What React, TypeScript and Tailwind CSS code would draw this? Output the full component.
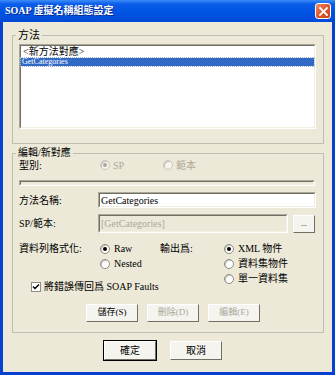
import React from 'react'

const Radio = ({ checked, disabled }: { checked?: boolean; disabled?: boolean }) => (
  <span
    className={`inline-flex h-[10px] w-[10px] shrink-0 items-center justify-center rounded-full border ${
      disabled ? 'border-[#CAC8BB] bg-[#F4F3EE]' : 'border-[#8E8C80] bg-white'
    } shadow-[inset_1px_1px_0_#C7C5B8]`}
  >
    {checked && (
      <span className={`h-[4px] w-[4px] rounded-full ${disabled ? 'bg-[#ACA899]' : 'bg-black'}`} />
    )}
  </span>
)

const Sunken = ({ className, children }: { className?: string; children?: React.ReactNode }) => (
  <div className={`border border-[#ACA899] border-b-white border-r-white ${className ?? ''}`}>
    <div className="h-full w-full border border-[#716F64] border-b-[#F1EFE2] border-r-[#F1EFE2]">
      {children}
    </div>
  </div>
)

const Button = ({
  label,
  disabled,
  isDefault,
  className,
}: {
  label: React.ReactNode
  disabled?: boolean
  isDefault?: boolean
  className?: string
}) => (
  <div
    className={`flex items-center justify-center ${
      isDefault ? 'border border-black' : 'border border-[#ECE9D8]'
    } ${className ?? ''}`}
  >
    <div className="flex h-full w-full items-center justify-center border border-white border-b-[#716F64] border-r-[#716F64] bg-[#F5F4EF]">
      <span className={disabled ? 'text-[#ACA899]' : 'text-black'}>{label}</span>
    </div>
  </div>
)

export default function App() {
  return (
    <div className="flex h-[375px] w-[335px] flex-col bg-[#0841D0] font-['Liberation_Serif','Noto_Sans_CJK_TC',serif] text-[10px] text-black">
      {/* title bar */}
      <div className="flex h-[22px] items-center bg-[linear-gradient(180deg,#3D8EF9_0%,#0B5DE9_18%,#0054E3_55%,#0049D8_100%)] pl-[5px] pr-[4px]">
        <span className="text-[10px] font-bold leading-none text-white [text-shadow:1px_1px_0_#0A2A8E]">
          SOAP 虛擬名稱組態設定
        </span>
        <div className="ml-auto flex h-[16px] w-[16px] items-center justify-center rounded-[3px] border border-white bg-[linear-gradient(135deg,#F08A66_0%,#E0572C_50%,#C8451E_100%)]">
          <svg width="9" height="9" viewBox="0 0 9 9">
            <path d="M1 1 L8 8 M8 1 L1 8" stroke="white" strokeWidth="1.8" strokeLinecap="square" />
          </svg>
        </div>
      </div>

      {/* body */}
      <div className="mx-[3px] mb-[3px] flex flex-1 flex-col bg-[#ECE9D8] pl-[9px]">
        {/* 方法 group */}
        <fieldset className="mt-[7px] h-[115px] w-[312px] border border-[#C0BDAE]">
          <legend className="ml-[3px] px-[2px] text-[11px] leading-[12px]">方法</legend>
          <div className="pl-[6px] pt-[3px]">
            <Sunken className="h-[85px] w-[297px] bg-white">
              <div className="flex h-[12px] items-center pl-[2px] text-[10px] leading-none">&lt;新方法對應&gt;</div>
              <div className="flex h-[8px] items-center bg-[#316AC5] pl-[1px] text-[8px] leading-none text-white outline outline-1 outline-dotted outline-[#9CB4DE]">
                GetCategories
              </div>
            </Sunken>
          </div>
        </fieldset>

        {/* 編輯/新對應 group */}
        <fieldset className="mt-[3px] h-[186px] w-[312px] border border-[#C0BDAE]">
          <legend className="ml-[3px] px-[2px] text-[10px] leading-[12px]">編輯/新對應</legend>
          <div className="flex flex-col pl-[6px]">
            <div className="flex h-[12px] items-center">
              <span className="w-[81px]">型別:</span>
              <div className="flex w-[63px] items-center gap-[3px] text-[#ACA899]">
                <Radio checked disabled />
                <span>SP</span>
              </div>
              <div className="flex items-center gap-[3px] text-[#ACA899]">
                <Radio disabled />
                <span>範本</span>
              </div>
            </div>

            <Sunken className="mt-[9px] h-[6px] w-[296px] bg-[#ECE9D8]" />

            <div className="mt-[6px] flex h-[16px] items-center">
              <span className="w-[79px]">方法名稱:</span>
              <Sunken className="h-[16px] w-[218px] bg-white">
                <div className="pl-[1px] text-[10px] leading-[13px]">GetCategories</div>
              </Sunken>
            </div>

            <div className="mt-[6px] flex h-[19px] items-center">
              <span className="w-[79px]">SP/範本:</span>
              <Sunken className="h-[19px] w-[190px] bg-[#ECE9D8]">
                <div className="pl-[1px] pt-[1px] text-[10px] leading-[13px] text-[#ACA899]">[GetCategories]</div>
              </Sunken>
              <Button label="..." className="ml-[4px] h-[20px] w-[24px] text-[8px]" />
            </div>

            <div className="mt-[8px] flex">
              <div className="flex flex-col">
                <div className="flex">
                  <span className="flex h-[15px] w-[81px] items-center">資料列格式化:</span>
                  <div className="flex w-[60px] flex-col">
                    <div className="flex h-[15px] items-center gap-[4px]">
                      <Radio checked />
                      <span>Raw</span>
                    </div>
                    <div className="flex h-[15px] items-center gap-[4px]">
                      <Radio />
                      <span>Nested</span>
                    </div>
                  </div>
                  <span className="flex h-[15px] w-[64px] items-center">輸出爲:</span>
                </div>
                <div className="ml-[12px] mt-[10px] flex h-[11px] items-center gap-[3px]">
                  <span className="flex h-[10px] w-[10px] items-center justify-center border border-[#8E8C80] bg-white">
                    <svg width="8" height="8" viewBox="0 0 8 8">
                      <path d="M1 3.5 L3 5.5 L7 1.5" stroke="black" strokeWidth="1.5" fill="none" />
                    </svg>
                  </span>
                  <span>將錯誤傳回爲 SOAP Faults</span>
                </div>
              </div>
              <div className="flex flex-col">
                <div className="flex h-[15px] items-center gap-[4px]">
                  <Radio checked />
                  <span>XML 物件</span>
                </div>
                <div className="flex h-[15px] items-center gap-[4px]">
                  <Radio />
                  <span>資料集物件</span>
                </div>
                <div className="flex h-[15px] items-center gap-[4px]">
                  <Radio />
                  <span>單一資料集</span>
                </div>
              </div>
            </div>

            <div className="ml-[66px] mt-[11px] flex gap-[7px]">
              <Button label="儲存(S)" className="h-[20px] w-[54px] text-[9px]" />
              <Button label="刪除(D)" disabled className="h-[20px] w-[54px] text-[9px]" />
              <Button label="編輯(E)" disabled className="h-[20px] w-[54px] text-[9px]" />
            </div>
          </div>
        </fieldset>

        <div className="ml-[91px] mt-[7px] flex gap-[12px]">
          <Button label="確定" isDefault className="h-[21px] w-[54px] text-[10px]" />
          <Button label="取消" className="h-[21px] w-[54px] text-[10px]" />
        </div>
      </div>
    </div>
  )
}
